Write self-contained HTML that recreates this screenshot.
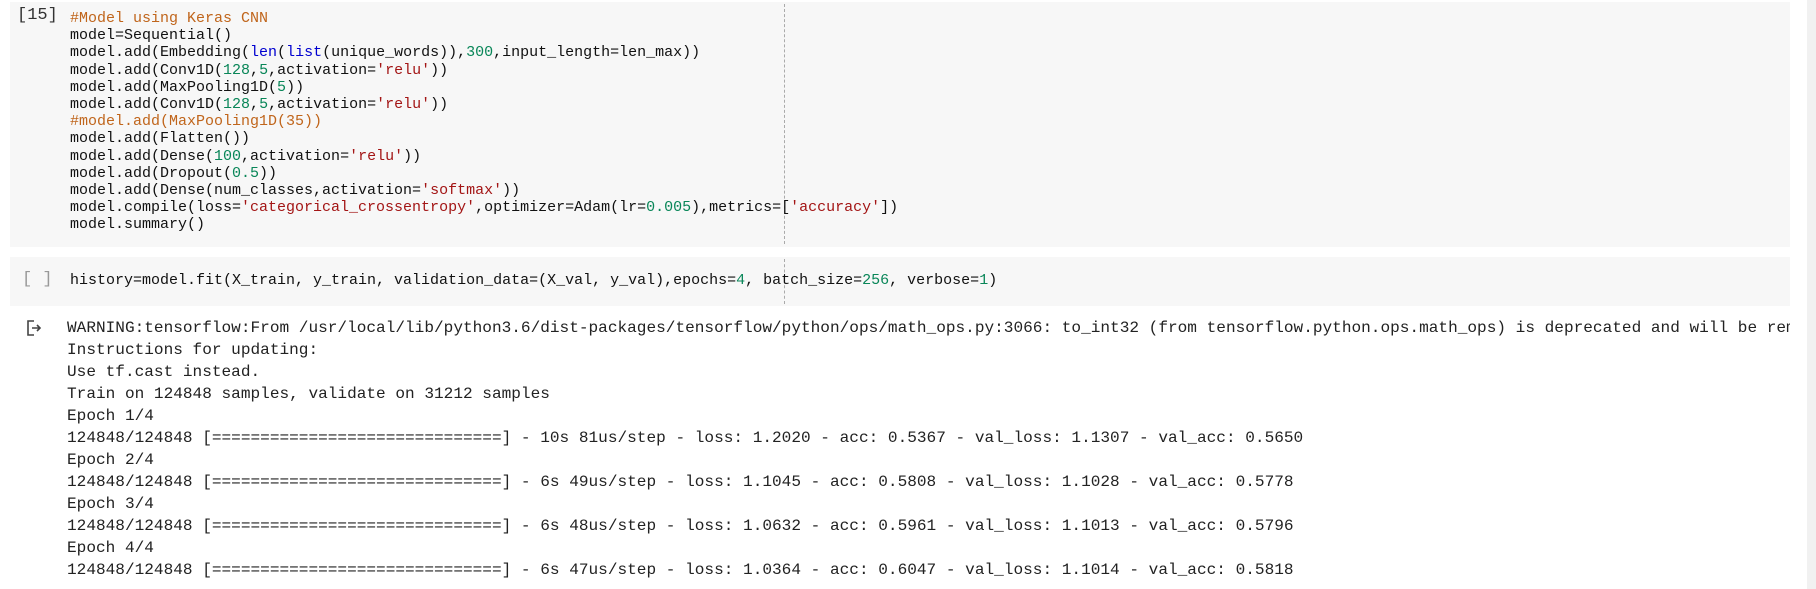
<!DOCTYPE html>
<html><head><meta charset="utf-8"><style>
body{margin:0;width:1816px;height:589px;background:#fff;position:relative;overflow:hidden;font-family:"Liberation Mono",monospace;}
.cell{position:absolute;left:10px;width:1780px;background:#f7f7f7;}
pre{margin:0;font-family:"Liberation Mono",monospace;}
.code{position:absolute;left:70px;font-size:15px;line-height:17.2px;color:#111;white-space:pre;}
.c{color:#c0651b}.s{color:#a31515}.n{color:#098658}.b{color:#0000d0}
.out{position:absolute;left:67px;top:317px;font-size:16.1px;line-height:22px;color:#222;white-space:pre;width:1723px;overflow:hidden;}
.lbl{position:absolute;font-size:17px;color:#333;}
.ruler{position:absolute;left:784px;border-left:1px dashed #aaa;}
.sb{position:absolute;left:1807px;top:0;width:9px;height:589px;background:#f1f1f1;}
</style></head><body>
<div class="cell" style="top:2px;height:245px"></div>
<div class="cell" style="top:257px;height:49px"></div>
<div class="ruler" style="top:4px;height:240px"></div>
<div class="ruler" style="top:259px;height:45px"></div>
<div class="lbl" style="left:17px;top:6px">[15]</div>
<div class="lbl" style="left:22px;top:270px;color:#999">[ ]</div>
<pre class="code" style="top:10px"><span class="c">#Model using Keras CNN</span>
model=Sequential()
model.add(Embedding(<span class="b">len</span>(<span class="b">list</span>(unique_words)),<span class="n">300</span>,input_length=len_max))
model.add(Conv1D(<span class="n">128</span>,<span class="n">5</span>,activation=<span class="s">'relu'</span>))
model.add(MaxPooling1D(<span class="n">5</span>))
model.add(Conv1D(<span class="n">128</span>,<span class="n">5</span>,activation=<span class="s">'relu'</span>))
<span class="c">#model.add(MaxPooling1D(35))</span>
model.add(Flatten())
model.add(Dense(<span class="n">100</span>,activation=<span class="s">'relu'</span>))
model.add(Dropout(<span class="n">0.5</span>))
model.add(Dense(num_classes,activation=<span class="s">'softmax'</span>))
model.compile(loss=<span class="s">'categorical_crossentropy'</span>,optimizer=Adam(lr=<span class="n">0.005</span>),metrics=[<span class="s">'accuracy'</span>])
model.summary()</pre>
<pre class="code" style="top:272px">history=model.fit(X_train, y_train, validation_data=(X_val, y_val),epochs=<span class="n">4</span>, batch_size=<span class="n">256</span>, verbose=<span class="n">1</span>)</pre>
<svg style="position:absolute;left:25px;top:319px" width="18" height="18" viewBox="0 0 18 18"><path d="M9 2H3v14h6" fill="none" stroke="#444" stroke-width="1.6"/><path d="M7 9h8M12 6l3 3-3 3" fill="none" stroke="#444" stroke-width="1.6"/></svg>
<pre class="out">WARNING:tensorflow:From /usr/local/lib/python3.6/dist-packages/tensorflow/python/ops/math_ops.py:3066: to_int32 (from tensorflow.python.ops.math_ops) is deprecated and will be rem
Instructions for updating:
Use tf.cast instead.
Train on 124848 samples, validate on 31212 samples
Epoch 1/4
124848/124848 [==============================] - 10s 81us/step - loss: 1.2020 - acc: 0.5367 - val_loss: 1.1307 - val_acc: 0.5650
Epoch 2/4
124848/124848 [==============================] - 6s 49us/step - loss: 1.1045 - acc: 0.5808 - val_loss: 1.1028 - val_acc: 0.5778
Epoch 3/4
124848/124848 [==============================] - 6s 48us/step - loss: 1.0632 - acc: 0.5961 - val_loss: 1.1013 - val_acc: 0.5796
Epoch 4/4
124848/124848 [==============================] - 6s 47us/step - loss: 1.0364 - acc: 0.6047 - val_loss: 1.1014 - val_acc: 0.5818</pre>
<div class="sb"></div>
</body></html>
